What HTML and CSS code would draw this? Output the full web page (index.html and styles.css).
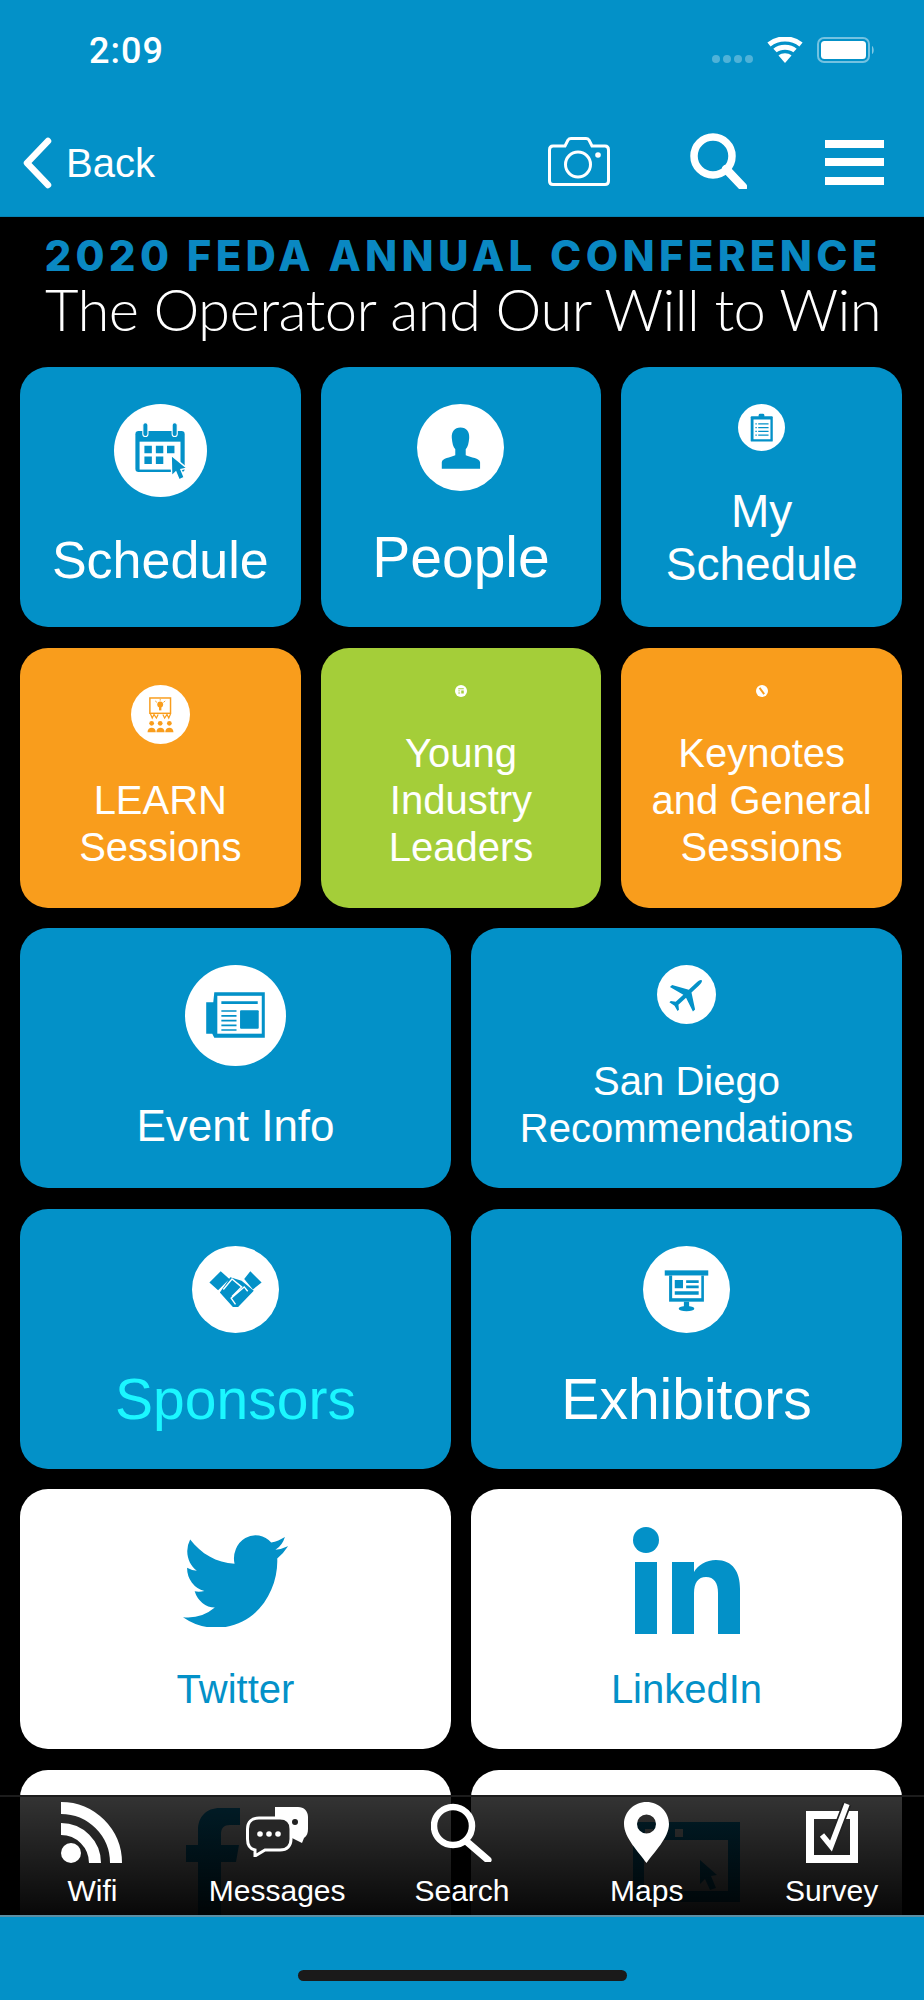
FILE: index.html
```html
<!DOCTYPE html>
<html>
<head>
<meta charset="utf-8">
<title>FEDA Annual Conference</title>
<link rel="stylesheet" href="styles.css">
</head>
<body>
<div class="app">
 <header class="top">
  <div class="status">
   <span class="clock">2:09</span>
   <div class="status-right">
    <span class="signal"><i></i><i></i><i></i><i></i></span>
    <svg class="wifi" viewBox="0 0 36 26"><path d="M18 26 L11.500 18.500 C15 15.500 21 15.500 24.500 18.500Z" fill="#fff"/><path d="M8 13.500 C13 9 23 9 28 13.500" fill="none" stroke="#fff" stroke-width="5"/><path d="M2 7.500 C11 0 25 0 34 7.500" fill="none" stroke="#fff" stroke-width="5"/></svg>
    <svg class="battery" viewBox="0 0 58 26"><rect x="1" y="1" width="51" height="24" rx="6" fill="none" stroke="#fff" stroke-opacity=".45" stroke-width="2"/><rect x="4" y="4" width="45" height="18" rx="3.500" fill="#fff"/><path d="M55 9 C57 10 57.500 16 55 17Z" fill="#fff" fill-opacity=".5"/></svg>
   </div>
  </div>
  <nav class="navbar">
   <a class="back">
    <svg class="chevron" viewBox="0 0 30 52"><path d="M26 4 L5 26 L26 48" fill="none" stroke="#fff" stroke-width="6.500" stroke-linecap="round" stroke-linejoin="round"/></svg>
    <span>Back</span>
   </a>
   <div class="nav-icons">
    <svg class="nav-camera" viewBox="0 0 62 49"><path d="M5 9 H17 L20 3 C21 1.500 22 1.500 23 1.500 H38 C39 1.500 40 1.500 41 3 L44 9 H57 C59.500 9 60.500 10.500 60.500 13 V44 C60.500 46.500 59 47.500 57 47.500 H5 C3 47.500 1.500 46.500 1.500 44 V13 C1.500 10.500 2.500 9 5 9Z" fill="none" stroke="#fff" stroke-width="3"/><circle cx="30" cy="27.500" r="12.500" fill="none" stroke="#fff" stroke-width="3"/><circle cx="50" cy="18" r="2.800" fill="#fff"/></svg>
    <svg class="nav-search" viewBox="0 0 57 56"><circle cx="23" cy="23" r="19" fill="none" stroke="#fff" stroke-width="7.500"/><path d="M36 36 L53 54" stroke="#fff" stroke-width="8.500" stroke-linecap="round"/></svg>
    <div class="burger"><i></i><i></i><i></i></div>
   </div>
  </nav>
 </header>

 <main class="content">
  <div class="banner">
   <div class="banner-year">2020 FEDA ANNUAL CONFERENCE</div>
   <div class="banner-theme">The Operator and Our Will to Win</div>
  </div>

  <div class="row row-3">
   <a class="tile blue">
    <svg class="ico ico-92" viewBox="0 0 100 100"><circle cx="50" cy="50" r="50" fill="#fff"/><rect x="23" y="29" width="53" height="44" rx="3.500" fill="#0391c8"/><rect x="27.500" y="40.500" width="44" height="30" fill="#fff"/><path d="M32.700 45h8v8h-8zM45 45h8v8h-8zM57 45h8v8h-8zM32.700 56.500h8v8h-8zM45 56.500h8v8h-8z" fill="#0391c8"/><rect x="31" y="20" width="5.500" height="15" rx="2.700" fill="#0391c8" stroke="#fff" stroke-width="1.200"/><rect x="62.500" y="20" width="5.500" height="15" rx="2.700" fill="#0391c8" stroke="#fff" stroke-width="1.200"/><path d="M61.500 55 L78.500 69 L72 70.500 L75.500 79 L70 81.500 L66.500 73 L62 77.500Z" fill="#0391c8" stroke="#fff" stroke-width="1.500"/></svg>
    <span class="label fs52">Schedule</span>
   </a>
   <a class="tile blue">
    <svg class="ico ico-87" viewBox="0 0 100 100"><circle cx="50" cy="50" r="50" fill="#fff"/><path d="M50 27 C43 27 39.500 32 40 39 C40.500 45 41.500 49 44 52 L44 59 C38 62 29 62 28.500 67 L28.500 74.500 H72.500 V67 C72 62 62 62 56 59 L56 52 C58.500 49 59.500 45 60 39 C60.500 32 57 27 50 27Z" fill="#0391c8"/></svg>
    <span class="label fs57">People</span>
   </a>
   <a class="tile blue">
    <svg class="ico ico-47" viewBox="0 0 100 100"><circle cx="50" cy="50" r="50" fill="#fff"/><rect x="27" y="26" width="47" height="54" rx="2" fill="#0391c8"/><rect x="33" y="33" width="36" height="42" fill="#fff"/><rect x="44" y="21" width="12" height="10" rx="3" fill="#0391c8"/><path d="M37 41h3v2.500h-3zM43 41h22v2.500h-22zM37 49h3v2.500h-3zM43 49h22v2.500h-22zM37 57h3v2.500h-3zM43 57h22v2.500h-22zM37 65h3v2.500h-3zM43 65h22v2.500h-22z" fill="#0391c8"/></svg>
    <span class="label fs46">My<br>Schedule</span>
   </a>
  </div>

  <div class="row row-3">
   <a class="tile orange">
    <svg class="ico ico-59" viewBox="0 0 100 100"><circle cx="50" cy="50" r="50" fill="#fff"/><rect x="32" y="22" width="35" height="26" fill="none" stroke="#f99d1c" stroke-width="2.500"/><circle cx="49.500" cy="33" r="5" fill="#f99d1c"/><rect x="47.500" y="37" width="4" height="6" fill="#f99d1c"/><path d="M41 27l3 2.500M58 27l-3 2.500M49.500 23.500v3" stroke="#f99d1c" stroke-width="1.500"/><path d="M33 49l3 7 3-6 4 6 3-6M67 49l-3 7-3-6-4 6-3-6" fill="none" stroke="#f99d1c" stroke-width="2"/><circle cx="35" cy="65" r="4" fill="#f99d1c"/><circle cx="49.500" cy="65" r="4" fill="#f99d1c"/><circle cx="65" cy="65" r="4" fill="#f99d1c"/><path d="M28 80 C28 70 42 70 42 80Z M43 80 C43 70 57 70 57 80Z M58 80 C58 70 72 70 72 80Z" fill="#f99d1c"/></svg>
    <span class="label up1">LEARN<br>Sessions</span>
   </a>
   <a class="tile green">
    <svg class="ico ico-12" viewBox="0 0 100 100"><circle cx="50" cy="50" r="50" fill="#fff"/><path d="M27 27h46v8h-46zM27 45h16v8h-16zM27 62h16v8h-16zM52 45h21v25h-21z" fill="#a4ce39"/></svg>
    <span class="label up1">Young<br>Industry<br>Leaders</span>
   </a>
   <a class="tile orange">
    <svg class="ico ico-12" viewBox="0 0 100 100"><circle cx="50" cy="50" r="50" fill="#fff"/><path d="M30 24 L68 76" stroke="#f99d1c" stroke-width="16"/></svg>
    <span class="label up1">Keynotes<br>and General<br>Sessions</span>
   </a>
  </div>

  <div class="row row-2">
   <a class="tile blue">
    <svg class="ico ico-101" viewBox="0 0 100 100"><circle cx="50" cy="50" r="50" fill="#fff"/><path d="M29 27 H79 V72 H29 L27 68 H21 V37 H28Z" fill="#0391c8"/><rect x="32" y="30.500" width="44" height="37.500" fill="#fff"/><path d="M36 36h36v2.500h-36zM36 44.700h15v1.700h-15zM36 49.500h15v1.700h-15zM36 54.300h15v1.700h-15zM36 59h15v1.700h-15zM36 63.500h15v1.700h-15z" fill="#0391c8"/><rect x="54.500" y="44.700" width="18.500" height="18.500" rx="1" fill="#0391c8"/></svg>
    <span class="label fs44">Event Info</span>
   </a>
   <a class="tile blue">
    <svg class="ico ico-59" viewBox="0 0 100 100"><circle cx="50" cy="50" r="50" fill="#fff"/><path transform="rotate(47 50 50) translate(8 8) scale(.84)" d="M50 8 C52.500 8 54 13 54 20 V40 L84 58 V64 L54 55 V76 L62 82 V86 L50 83 L38 86 V82 L46 76 V55 L16 64 V58 L46 40 V20 C46 13 47.500 8 50 8Z" fill="#0391c8"/></svg>
    <span class="label">San Diego<br>Recommendations</span>
   </a>
  </div>

  <div class="row row-2">
   <a class="tile blue">
    <svg class="ico ico-87" viewBox="0 0 100 100"><circle cx="50" cy="50" r="50" fill="#fff"/><path d="M20 42 L33 29 L43 38 L30 51Z M60 38 L67 29 L80 42 L70 50Z M44 36 L57 40 L71 51.500 L53 70 L47 70 L32 53.500Z" fill="#0391c8"/><path d="M36 50 L46 38 L57 47 L46 58 M50 67 L45 60 L60 47 L64 52" fill="none" stroke="#fff" stroke-width="1.600"/></svg>
    <span class="label label-cyan fs57">Sponsors</span>
   </a>
   <a class="tile blue">
    <svg class="ico ico-87" viewBox="0 0 100 100"><circle cx="50" cy="50" r="50" fill="#fff"/><rect x="25" y="28" width="50" height="6" fill="#0391c8"/><rect x="30" y="34" width="40" height="30" fill="#0391c8"/><rect x="33.500" y="34" width="33.500" height="26" fill="#fff"/><path d="M36.500 39h9.500v9.500h-9.500zM49.600 39.500h14.400v3h-14.400zM49.600 45.300h14.400v3.200h-14.400zM36.500 52h27.500v4h-27.500zM47 64h6v6h-6z" fill="#0391c8"/><ellipse cx="50" cy="72" rx="9" ry="3" fill="#0391c8"/></svg>
    <span class="label fs57">Exhibitors</span>
   </a>
  </div>

  <div class="row row-2">
   <a class="tile white">
    <svg class="ico-twitter" viewBox="0 2 24 19.600" preserveAspectRatio="none"><path d="M23.953 4.570a10 10 0 01-2.825.775 4.958 4.958 0 002.163-2.723c-.951.555-2.005.959-3.127 1.184a4.920 4.920 0 00-8.384 4.482C7.690 8.095 4.067 6.130 1.640 3.162a4.822 4.822 0 00-.666 2.475c0 1.710.870 3.213 2.188 4.096a4.904 4.904 0 01-2.228-.616v.060a4.923 4.923 0 003.946 4.827 4.996 4.996 0 01-2.212.085 4.936 4.936 0 004.604 3.417 9.867 9.867 0 01-6.102 2.105c-.390 0-.779-.023-1.170-.067a13.995 13.995 0 007.557 2.209c9.053 0 13.998-7.496 13.998-13.985 0-.210 0-.420-.015-.630A9.935 9.935 0 0024 4.590z" fill="#0391c8"/></svg>
    <span class="label label-blue">Twitter</span>
   </a>
   <a class="tile white">
    <svg class="ico-linkedin" viewBox="0 0 107 107"><ellipse cx="13" cy="13" rx="13" ry="13" fill="#0391c8"/><rect x="2" y="35" width="22" height="72" fill="#0391c8"/><path d="M39 35 H61 V45 C65 38 73 33 83 33 C100 33 107 45 107 62 V107 H85 V66 C85 56 81 50 73 50 C65 50 61 56 61 66 V107 H39Z" fill="#0391c8"/></svg>
    <span class="label label-blue">LinkedIn</span>
   </a>
  </div>

  <div class="row row-2">
   <a class="tile white">
    <svg class="ico-facebook" viewBox="0 0 54 120"><path d="M54 0 H34 C20 0 12 9 12 22 V37 H0 V54 H12 V120 H35 V54 H50 L53 37 H35 V26 C35 20 38 17 44 17 H54Z" fill="#0391c8"/></svg>
   </a>
   <a class="tile white">
    <svg class="ico-website" viewBox="0 0 107 80"><path d="M0 0H107V80H0Z M11 18V69H95V18Z" fill="#0391c8" fill-rule="evenodd"/><rect x="12" y="7" width="8" height="8" fill="#fff"/><rect x="42" y="7" width="8" height="8" fill="#fff"/><path d="M67 38 L84 53 L78 54 L83 66 L77 68 L72 57 L67 62Z" fill="#0391c8"/></svg>
   </a>
  </div>

  <nav class="tabbar">
   <a class="tab">
    <svg class="tab-wifi" viewBox="0 0 62 61"><circle cx="10" cy="51" r="10" fill="#fff"/><path d="M0 27 A34 34 0 0 1 34 61" fill="none" stroke="#fff" stroke-width="12"/><path d="M0 6 A55 55 0 0 1 55 61" fill="none" stroke="#fff" stroke-width="12"/></svg>
    <span>Wifi</span>
   </a>
   <a class="tab">
    <svg class="tab-msg" viewBox="0 0 62 50"><path d="M29 0 H52 C58 0 62 4 62 10 V22 C62 26 61 29 58 31 L56 36 L44 30 H29Z" fill="#fff"/><circle cx="49" cy="15" r="3" fill="#222"/><path d="M13 11 H34 C41 11 45 15 45 22 V32 C45 39 41 43 34 43 H19 L9 49 L9 43 C4 42 1.500 38 1.500 32 V22 C1.500 15 6 11 13 11Z" fill="#262626" stroke="#fff" stroke-width="3"/><circle cx="14" cy="27" r="2.800" fill="#fff"/><circle cx="23" cy="27" r="2.800" fill="#fff"/><circle cx="32" cy="27" r="2.800" fill="#fff"/></svg>
    <span>Messages</span>
   </a>
   <a class="tab">
    <svg class="tab-search" viewBox="0 0 61 59"><circle cx="22" cy="23" r="19" fill="none" stroke="#fff" stroke-width="6.500"/><path d="M35 38 L57 57" stroke="#fff" stroke-width="7" stroke-linecap="round"/></svg>
    <span>Search</span>
   </a>
   <a class="tab">
    <svg class="tab-pin" viewBox="0 0 45 61"><path fill-rule="evenodd" d="M22.500 0 C10 0 0 10 0 22 C0 36 15 50 22.500 61 C30 50 45 36 45 22 C45 10 35 0 22.500 0Z M22.500 12.500 A9.500 9.500 0 1 1 22.500 31.500 A9.500 9.500 0 1 1 22.500 12.500Z" fill="#fff"/></svg>
    <span>Maps</span>
   </a>
   <a class="tab">
    <svg class="tab-survey" viewBox="0 0 52 61"><rect x="4" y="13" width="44" height="44" fill="none" stroke="#fff" stroke-width="8"/><path d="M16 33 L25 44 L41 2" fill="none" stroke="#222" stroke-width="9"/><path d="M16 33 L25 44 L41 2" fill="none" stroke="#fff" stroke-width="5.500"/></svg>
    <span>Survey</span>
   </a>
  </nav>
 </main>

 <footer class="bottom"><div class="home"></div></footer>
</div>
</body>
</html>
```

FILE: styles.css
```css
* {
 box-sizing: border-box;
}
body {
 margin: 0;
 background: #000;
 font-family: "Liberation Sans", Arial, sans-serif;
 color: #fff;
}
a {
 color: inherit;
}
svg {
 display: block;
}
.app {
 width: 924px;
 height: 2000px;
 display: flex;
 flex-direction: column;
 overflow: hidden;
}

/* header */
.top {
 height: 217px;
 flex: none;
 background: #0391c8;
 border-bottom: 1px solid #0682b3;
}
.status {
 height: 106px;
 display: flex;
 justify-content: space-between;
 padding: 30px 49px 0 89px;
}
.clock {
 font-family: Roboto, sans-serif;
 font-weight: 500;
 font-size: 36px;
 line-height: 42px;
 letter-spacing: 1px;
}
.status-right {
 display: flex;
 align-items: flex-start;
 padding-top: 7px;
}
.signal {
 display: flex;
 gap: 3px;
 margin: 18px 14px 0 0;
}
.signal i {
 width: 8px;
 height: 8px;
 border-radius: 50%;
 background: rgba(255,255,255,.3);
}
.wifi {
 width: 36px;
 height: 26px;
 margin-right: 14px;
}
.battery {
 width: 58px;
 height: 26px;
}
.navbar {
 display: flex;
 justify-content: space-between;
 align-items: center;
 height: 110px;
 padding: 0 40px 0 22px;
}
.back {
 display: flex;
 align-items: center;
 gap: 14px;
 font-size: 40px;
 padding-top: 4px;
}
.chevron {
 width: 30px;
 height: 52px;
}
.nav-icons {
 display: flex;
 align-items: center;
}
.nav-camera {
 width: 62px;
 height: 49px;
 margin-right: 80px;
}
.nav-search {
 width: 57px;
 height: 56px;
 margin-right: 78px;
}
.burger {
 width: 59px;
 display: flex;
 flex-direction: column;
 gap: 10.500px;
 padding-top: 2px;
}
.burger i {
 height: 8px;
 background: #fff;
}

/* scrolling part */
.content {
 position: relative;
 flex: 1;
 min-height: 0;
 overflow: hidden;
 padding: 0 22px 0 20px;
}
.banner {
 height: 150px;
 padding: 20px 0 0 4px;
 text-align: center;
 white-space: nowrap;
}
.banner-year {
 font-family: Inter, sans-serif;
 font-weight: 800;
 font-size: 42px;
 line-height: 38px;
 letter-spacing: 4.300px;
 color: #0a88c2;
}
.banner-theme {
 font-family: Lato, sans-serif;
 font-weight: 300;
 font-size: 58px;
 line-height: 64px;
 letter-spacing: -0.600px;
 margin-top: 2px;
}
.row {
 display: grid;
 gap: 20px;
 margin-bottom: 20.600px;
}
.row-3 {
 grid-template-columns: repeat(3, 1fr);
}
.row-2 {
 grid-template-columns: repeat(2, 1fr);
}
.tile {
 height: 260px;
 border-radius: 28px;
 padding: 37px 0 36px;
 display: flex;
 flex-direction: column;
 align-items: center;
 justify-content: space-between;
 text-align: center;
}
.blue {
 background: #0391c8;
}
.orange {
 background: #f99d1c;
}
.green {
 background: #a4ce39;
}
.white {
 background: #fff;
}
.label {
 font-size: 40px;
 line-height: 47px;
}
.up1 {
 margin-bottom: 1px;
}
.fs44 {
 font-size: 44px;
 line-height: 52px;
}
.fs46 {
 font-size: 46px;
 line-height: 53px;
}
.fs52 {
 font-size: 52px;
 line-height: 61px;
}
.fs57 {
 font-size: 57px;
 line-height: 67px;
}
.label-cyan {
 color: #1bf7ff;
}
.label-blue {
 color: #0391c8;
}
.ico-12 {
 width: 12px;
 height: 12px;
}
.ico-47 {
 width: 47px;
 height: 47px;
}
.ico-59 {
 width: 59px;
 height: 59px;
}
.ico-87 {
 width: 87px;
 height: 87px;
}
.ico-92 {
 width: 93px;
 height: 93px;
}
.ico-101 {
 width: 101px;
 height: 101px;
}
.ico-twitter {
 width: 105px;
 height: 93px;
 margin-top: 8px;
}
.ico-linkedin {
 width: 107px;
 height: 107px;
 margin-top: 1px;
}
.ico-facebook {
 width: 54px;
 height: 120px;
 margin: 1px 0 0 -46px;
 flex: none;
}
.ico-website {
 width: 107px;
 height: 80px;
 margin-top: 15px;
 flex: none;
}

/* tab bar lies over the list */
.tabbar {
 position: absolute;
 left: 0;
 right: 0;
 bottom: 0;
 height: 122px;
 display: grid;
 grid-template-columns: repeat(5, 1fr);
 background: linear-gradient(rgba(0,0,0,.8), rgba(0,0,0,.97));
 border-top: 2px solid #1c1c1c;
 border-bottom: 2px solid #5d8ea3;
}
.tab {
 display: flex;
 flex-direction: column;
 align-items: center;
 justify-content: flex-end;
 height: 112px;
 font-size: 30px;
 line-height: 36px;
}
.tab svg {
 margin-bottom: 10px;
}
.tab .tab-wifi {
 width: 62px;
 height: 61px;
}
.tab .tab-msg {
 width: 62px;
 height: 50px;
 margin-bottom: 16px;
}
.tab .tab-search {
 width: 61px;
 height: 59px;
 margin-bottom: 11px;
}
.tab .tab-pin {
 width: 45px;
 height: 61px;
}
.tab .tab-survey {
 width: 52px;
 height: 61px;
}
.bottom {
 height: 83px;
 flex: none;
 background: #0391c8;
 display: flex;
 justify-content: center;
 padding-top: 53px;
}
.home {
 width: 329px;
 height: 11px;
 border-radius: 6px;
 background: #1a1a1a;
}
```
